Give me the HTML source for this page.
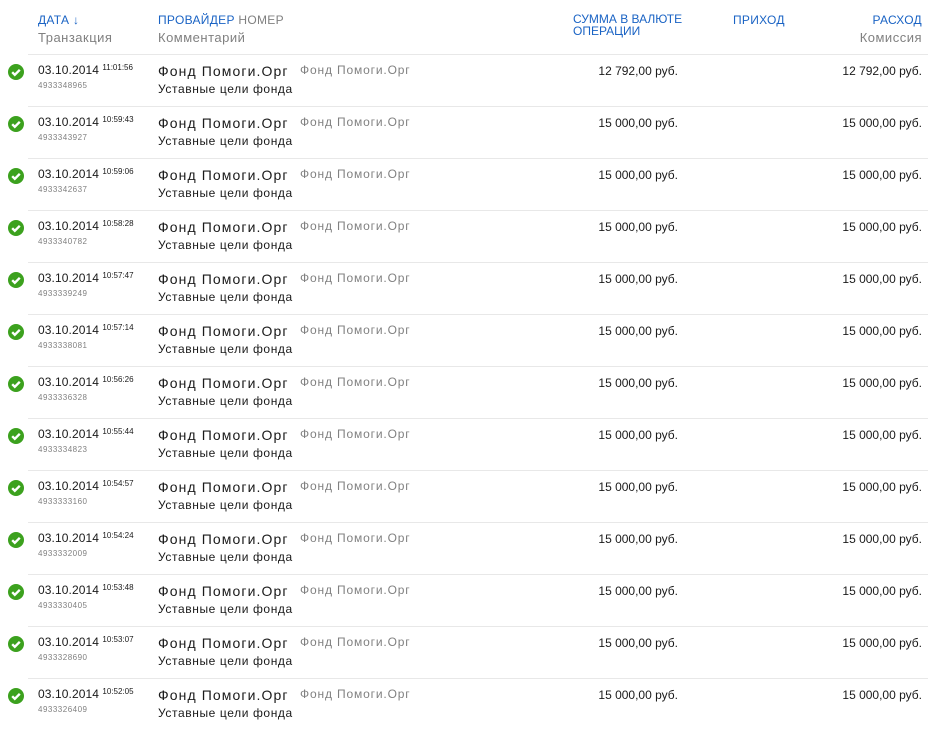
<!DOCTYPE html><html><head><meta charset="utf-8"><style>
body{margin:0;width:943px;height:729px;background:#fff;font-family:"Liberation Sans",sans-serif;position:relative;overflow:hidden;color:#1a1a1a}
.a{position:absolute;white-space:nowrap}
.b{color:#1a63c4;font-size:12px;letter-spacing:0.3px}
.g{color:#808080}
.row{position:absolute;left:0;width:943px;height:52px}
.ln{position:absolute;left:28px;width:900px;height:1px;background:#e8e8e8}
</style></head><body>
<div class="a b" style="left:38px;top:13px">ДАТА ↓</div>
<div class="a g" style="left:38px;top:30px;font-size:13px;letter-spacing:0.5px">Транзакция</div>
<div class="a b" style="left:158px;top:13px">ПРОВАЙДЕР <span class="g">НОМЕР</span></div>
<div class="a g" style="left:158px;top:30px;font-size:13px;letter-spacing:0.5px">Комментарий</div>
<div class="a b" style="left:573px;top:13px;line-height:12px;letter-spacing:0">СУММА В ВАЛЮТЕ<br>ОПЕРАЦИИ</div>
<div class="a b" style="left:733px;top:13px">ПРИХОД</div>
<div class="a b" style="right:21px;top:13px">РАСХОД</div>
<div class="a g" style="right:21px;top:30px;font-size:13px;letter-spacing:0.5px">Комиссия</div>
<div id="rows"></div>
<script>
var d=[["11:01:56","4933348965","12 792,00"],["10:59:43","4933343927"],["10:59:06","4933342637"],["10:58:28","4933340782"],["10:57:47","4933339249"],["10:57:14","4933338081"],["10:56:26","4933336328"],["10:55:44","4933334823"],["10:54:57","4933333160"],["10:54:24","4933332009"],["10:53:48","4933330405"],["10:53:07","4933328690"],["10:52:05","4933326409"]];
var h='';d.forEach(function(r,i){var t=54+i*52,s=(r[2]||"15 000,00")+" руб.";
h+='<div class="row" style="top:'+t+'px"><div class="ln" style="top:0"></div>'+
'<svg class="a" style="left:8px;top:10px" width="16" height="16"><circle cx="8" cy="8" r="8" fill="#3ca11e"/><path d="M4.2 8.2l2.6 2.6 5-5" stroke="#fff" stroke-width="2.4" fill="none"/></svg>'+
'<div class="a" style="left:38px;top:9px;font-size:12px"><span style="letter-spacing:0.1px">03.10.2014</span> <sup style="font-size:8px;vertical-align:4px">'+r[0]+'</sup></div>'+
'<div class="a g" style="left:38px;top:27px;font-size:8px;letter-spacing:0.5px">'+r[1]+'</div>'+
'<div class="a" style="left:158px;top:9px;font-size:14px;letter-spacing:1.1px">Фонд Помоги.Орг</div>'+
'<div class="a g" style="left:300px;top:9px;font-size:12px;letter-spacing:0.85px">Фонд Помоги.Орг</div>'+
'<div class="a" style="left:158px;top:28px;font-size:12px;letter-spacing:0.6px">Уставные цели фонда</div>'+
'<div class="a" style="right:265px;top:10px;font-size:12px">'+s+'</div>'+
'<div class="a" style="right:21px;top:10px;font-size:12px">'+s+'</div></div>';});
document.getElementById('rows').innerHTML=h;
</script>
</body></html>
